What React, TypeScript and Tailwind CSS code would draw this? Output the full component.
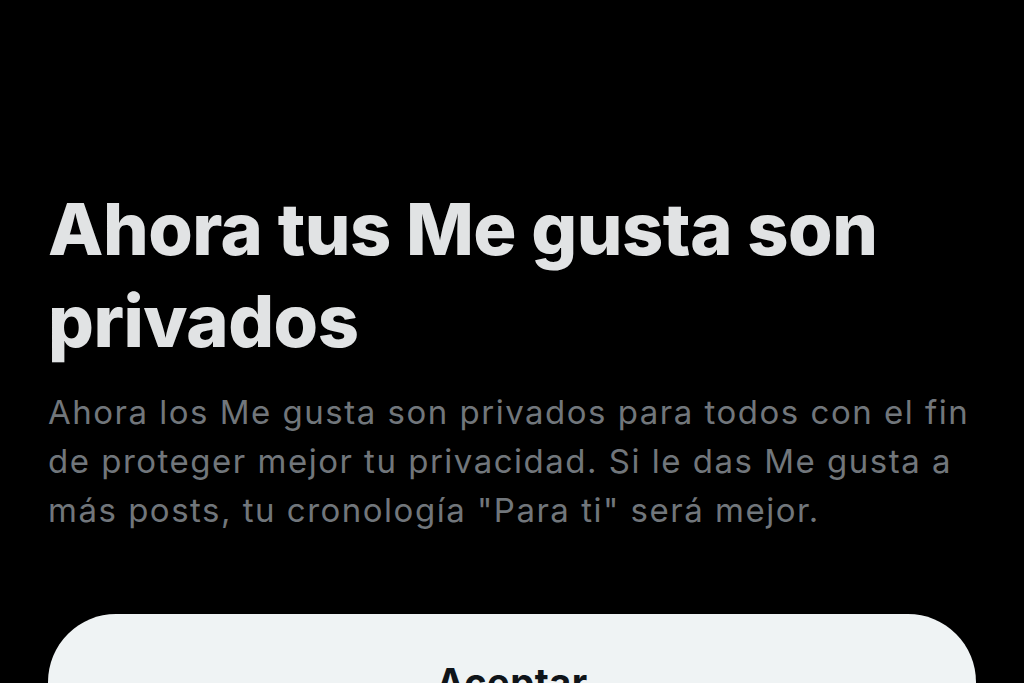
export default function App() {
  return (
    <div
      className="w-[1024px] h-[683px] overflow-hidden bg-black flex flex-col px-12 pt-[183px]"
      style={{ fontFamily: "Inter, 'Noto Sans', sans-serif" }}
    >
      <h1 className="text-[#e1e3e4] text-[72px] leading-[92px] font-extrabold tracking-[-0.5px]">
        Ahora tus Me gusta son
        <br />
        privados
      </h1>
      <p className="mt-[21px] text-[#71767b] text-[33px] leading-[49px] font-normal tracking-[1.5px] whitespace-nowrap">
        Ahora los Me gusta son privados para todos con el fin
        <br />
        de proteger mejor tu privacidad. Si le das Me gusta a
        <br />
        más posts, tu cronología "Para ti" será mejor.
      </p>
      <button className="mt-[79px] shrink-0 h-[136px] w-full rounded-full bg-[#eff3f4] text-[#0f1419] text-[38px] font-bold tracking-[0.5px] flex items-center justify-center">
        Aceptar
      </button>
    </div>
  );
}
